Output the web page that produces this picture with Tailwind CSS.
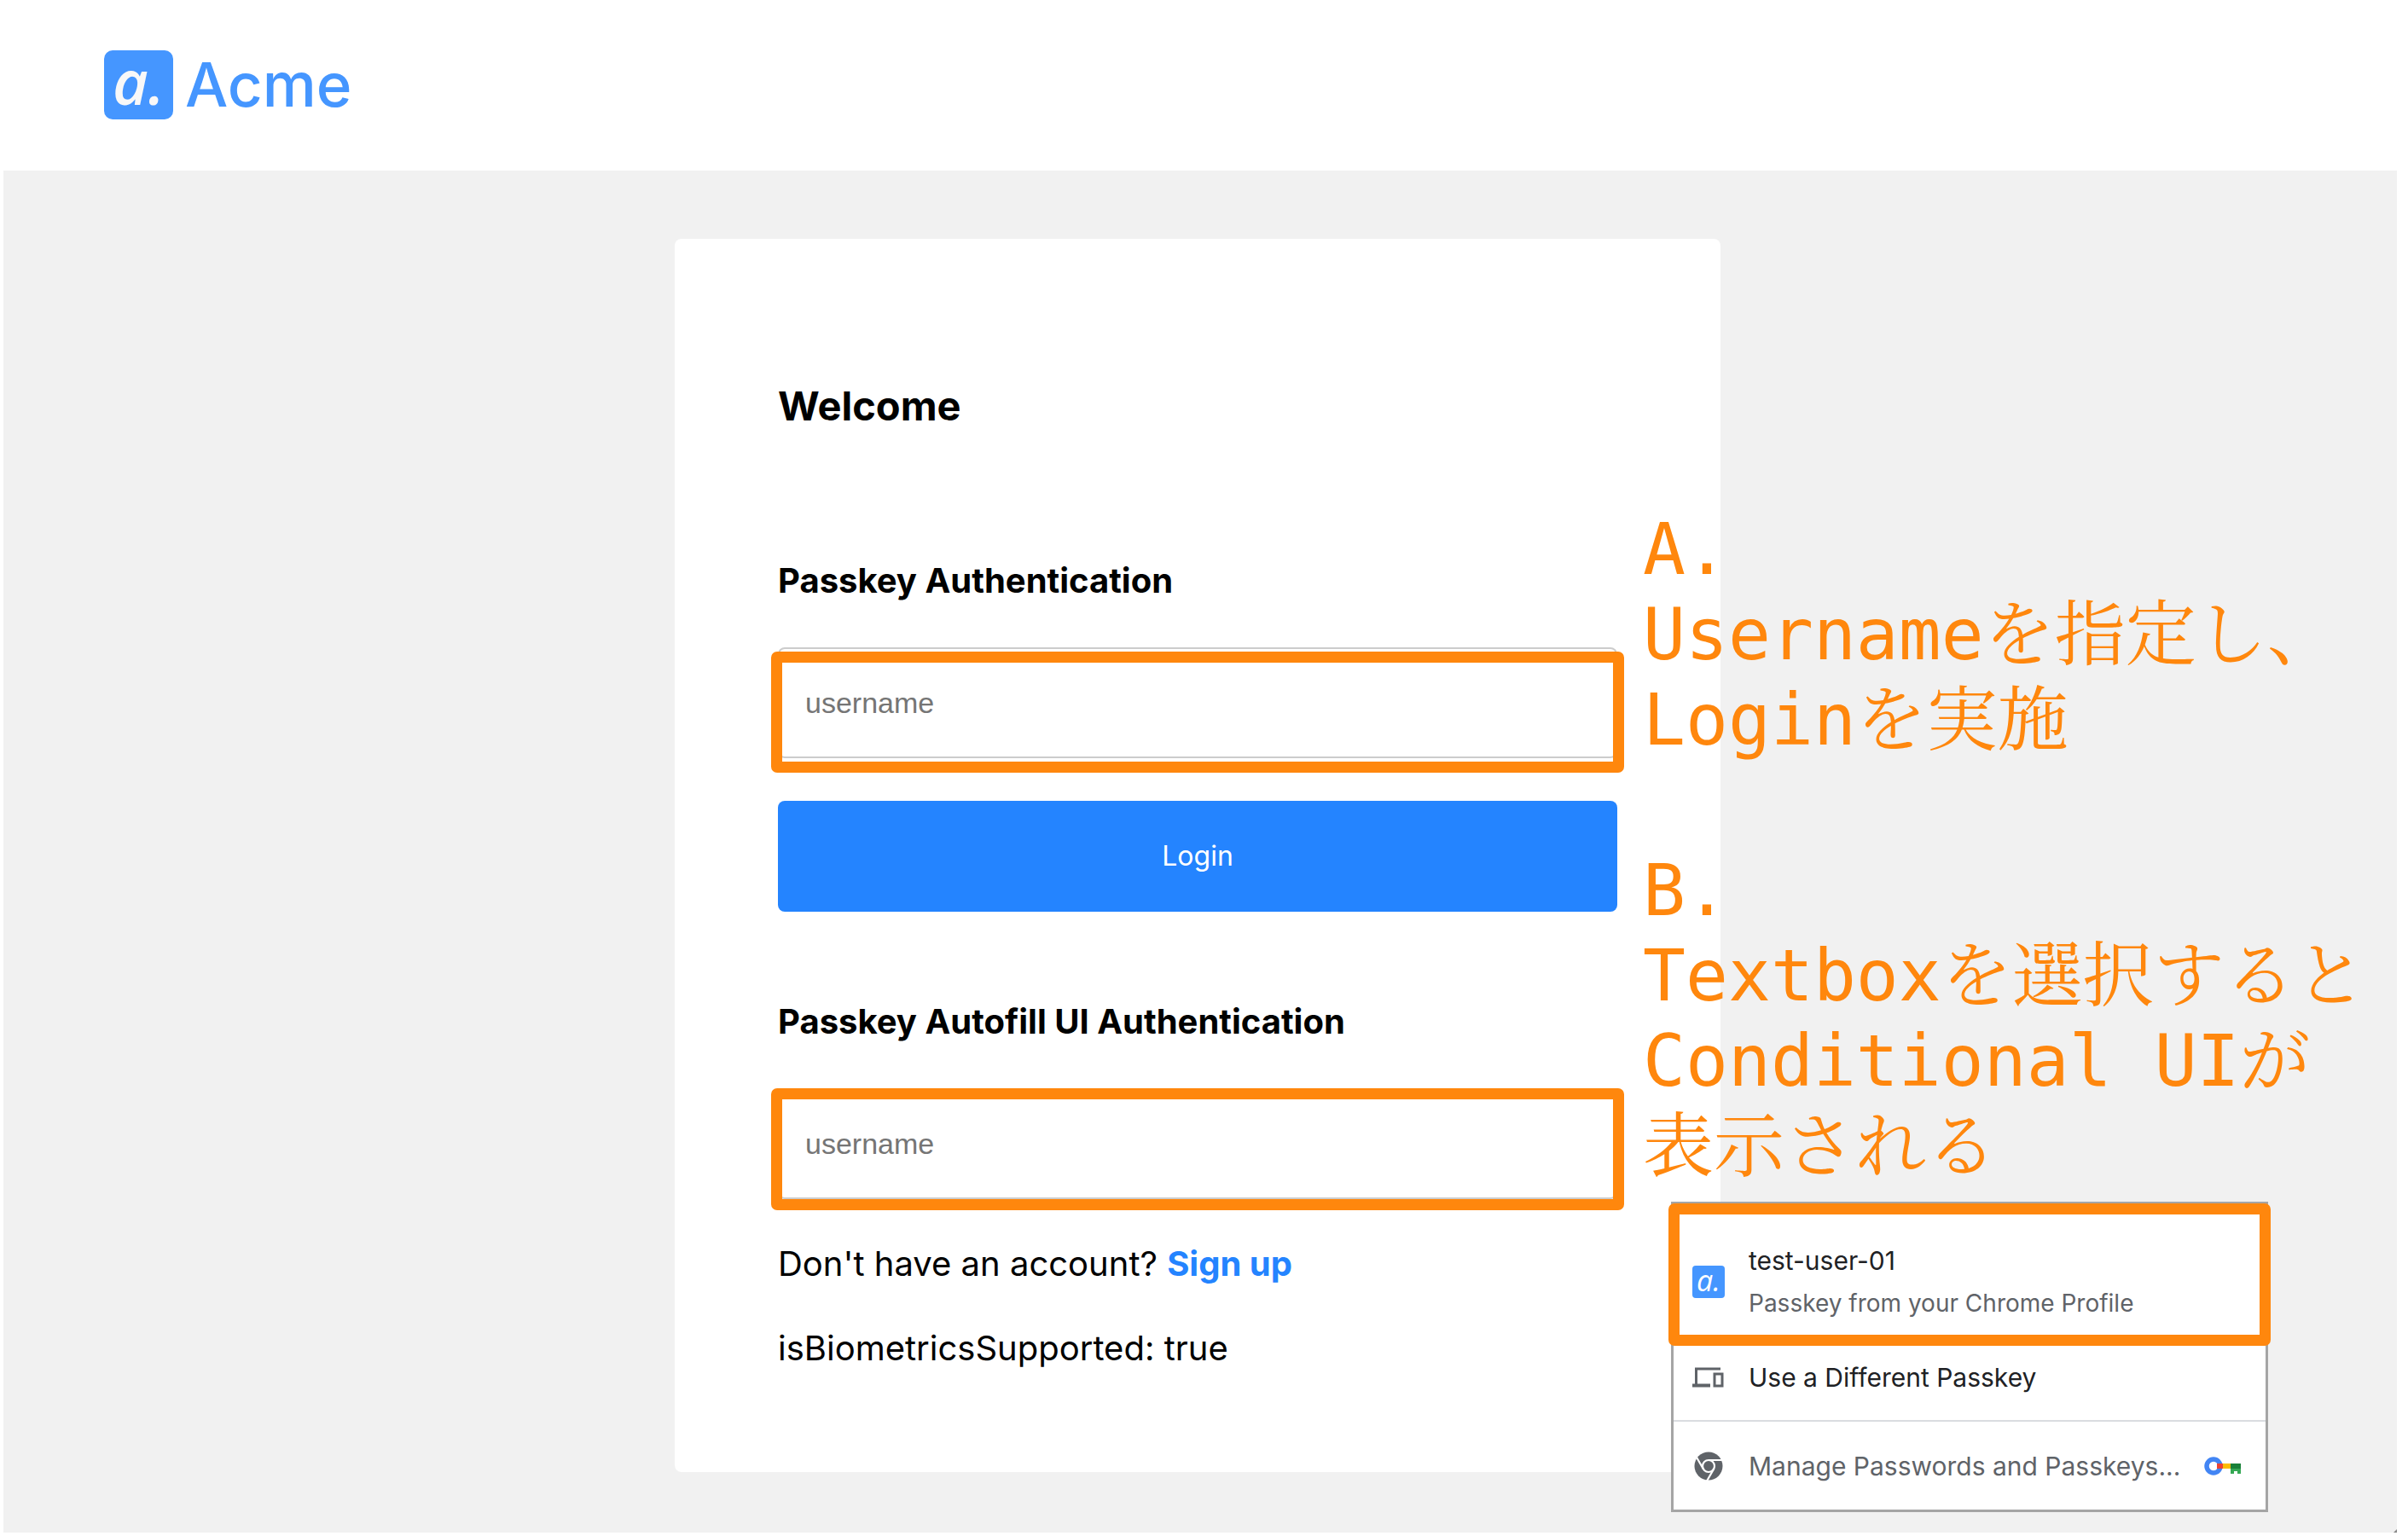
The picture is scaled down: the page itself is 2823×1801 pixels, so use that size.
<!DOCTYPE html>
<html lang="ja">
<head>
<meta charset="utf-8">
<title>Acme - Welcome</title>
<script src="https://cdn.jsdelivr.net/npm/@tailwindcss/browser@4"></script>
</head>
<body class="bg-white font-[Inter,sans-serif] text-black">
<div class="flex min-h-screen flex-col overflow-x-hidden">
  <header class="flex h-[200px] items-center px-[122px] pb-[2px]">
    <a href="#" class="flex items-center gap-3.5 text-[#4596ff]">
      <span class="flex size-[81px] items-center justify-center rounded-[10px] bg-[#4596ff] pb-2 font-['Open_Sans',sans-serif] text-[72px] leading-[80px] font-semibold text-[#f8f8f8] italic">a.</span>
      <span class="text-[71px] leading-[80px] font-medium">Acme</span>
    </a>
  </header>

  <main class="relative mr-[13px] mb-1 ml-1 flex flex-1 items-start justify-center bg-[#f1f1f1] pt-20 pr-[6px] pb-16">
    <div class="relative w-[1226px] rounded-lg bg-white px-[121px] pt-[166px] pb-[121px]">
      <h1 class="text-[47px] leading-[60px] font-bold">Welcome</h1>

      <form class="mt-[151px]">
        <h2 class="text-[40px] leading-[48px] font-bold"><label for="username">Passkey Authentication</label></h2>
        <div class="relative mt-[54px]">
          <input id="username" type="text" placeholder="username" class="block h-[130px] w-full rounded-lg border-2 border-[#ccc] bg-white px-[30px] font-['Liberation_Sans',sans-serif] text-[34px] placeholder:text-[#757575]">
          <div class="pointer-events-none absolute -inset-x-2 top-[5px] -bottom-[17px] rounded-[7px] border-[13px] border-[#ff870d]"></div>
        </div>
        <button type="button" class="mt-[50px] block h-[130px] w-full rounded-lg bg-[#2484ff] text-[32px] text-white">Login</button>
      </form>

      <form class="mt-[105px]">
        <h2 class="text-[40px] leading-[48px] font-bold"><label for="autofill">Passkey Autofill UI Authentication</label></h2>
        <div class="relative mt-[54px]">
          <input id="autofill" type="text" placeholder="username" class="block h-[130px] w-full rounded-lg border-2 border-[#ccc] bg-white px-[30px] font-['Liberation_Sans',sans-serif] text-[34px] placeholder:text-[#757575]">
          <div class="pointer-events-none absolute -inset-x-2 top-0 -bottom-[13px] rounded-[7px] border-[13px] border-[#ff870d]"></div>
        </div>
      </form>

      <p class="mt-[52px] text-[40px] leading-[48px]">Don't have an account? <a href="#" class="font-bold text-[#2484ff]">Sign up</a></p>
      <p class="mt-[51px] text-[40px] leading-[48px]">isBiometricsSupported: true</p>

      <!-- notes beside the form -->
      <div class="absolute top-[315px] left-[1135px] font-['DejaVu_Sans_Mono','Noto_Serif_CJK_JP','Noto_Sans_CJK_JP',monospace] text-[83px] leading-[100px] whitespace-nowrap text-[#ff870d]">
        <p>A.<br>Usernameを指定し、<br>Loginを実施</p>
        <p class="mt-[100px]">B.<br>Textboxを選択すると<br>Conditional UIが<br>表示される</p>
      </div>

      <!-- passkey autofill menu -->
      <div class="absolute top-[1129px] left-[1168px] w-[700px] border-3 border-[#a5a5a5] bg-white text-[30px] leading-[50px] text-[#202124]">
        <button type="button" class="flex w-full items-center gap-7 pt-[41px] pb-[11px] pl-[22px] text-left">
          <span class="flex size-[38px] items-center justify-center rounded-[4px] bg-[#4596ff] pb-1 font-['Open_Sans',sans-serif] text-[34px] leading-8 font-medium text-white italic">a.</span>
          <span><span class="block">test-user-01</span><span class="block text-[28px] text-[#5f6368]">Passkey from your Chrome Profile</span></span>
        </button>
        <button type="button" class="flex h-[101px] w-full items-center gap-7 pl-[22px] text-left">
          <svg class="w-[38px]" viewBox="0 0 38 24" fill="none" stroke="#5f6368">
            <path d="M4.5 20V2H33" stroke-width="3"/><path d="M0 21.5h21" stroke-width="4"/><path d="M26 8h9v14h-9z" stroke-width="3"/>
          </svg>
          <span>Use a Different Passkey</span>
        </button>
        <button type="button" class="flex h-[105px] w-full items-center gap-7 border-t-2 border-[#dadce0] pr-7 pl-[22px] text-left text-[#5f6368]">
          <svg class="w-[38px] shrink-0" viewBox="0 0 38 34">
            <circle cx="19" cy="17" r="16.5" fill="#5f6368"/>
            <g fill="none" stroke="#fff" stroke-width="2.2"><circle cx="19" cy="17" r="7"/><path d="M19 10h17M12.9 20.5L4.4 5.8M25.1 20.5L16.6 35.2"/></g>
          </svg>
          <span class="w-0 flex-1 whitespace-nowrap">Manage Passwords and Passkeys...</span>
          <svg class="w-[44px] shrink-0" viewBox="0 0 44 22">
            <circle cx="11" cy="11" r="8" fill="none" stroke="#4285f4" stroke-width="5.5"/>
            <path d="M15 8h7v6h-7z" fill="#ea4335"/><path d="M22 8h9v6h-9z" fill="#fbbc04"/>
            <path d="M31 14h12v6h-4v-3h-4v3h-4z" fill="#34a853"/><path d="M31 8h12v6H31z" fill="#188038"/>
          </svg>
        </button>
        <div class="pointer-events-none absolute -top-px -right-[6px] -left-[6px] h-[167px] rounded-[7px] border-[13px] border-[#ff870d]"></div>
      </div>
    </div>
    <svg class="absolute right-0 bottom-0 size-1" viewBox="0 0 4 4"><path d="M4 0v4H0z" fill="#888"/></svg>
  </main>
</div>
</body>
</html>
